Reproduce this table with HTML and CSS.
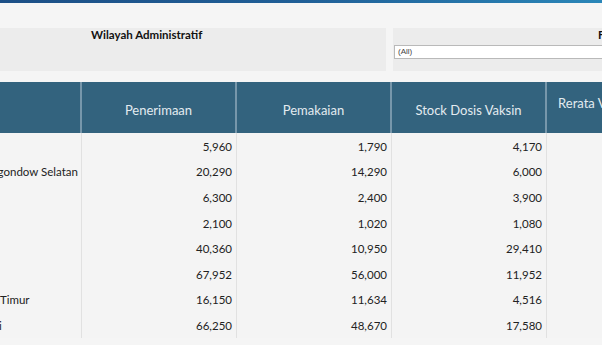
FILE: index.html
```html
<!DOCTYPE html>
<html lang="id">
<head>
<meta charset="utf-8">
<title>Stok Vaksin</title>
<link rel="stylesheet" href="styles.css">
</head>
<body>
<div class="topbar"></div>
<div class="board">
  <div class="filters">
    <div class="filter filter-wide">
      <div class="filter-title">Wilayah Administratif</div>
    </div>
    <div class="filter filter-narrow">
      <div class="filter-title filter-title-right">Fasilitas Kesehatan</div>
      <div class="select">(All)</div>
    </div>
  </div>
  <div class="table">
    <div class="row head">
      <div class="cell name"></div>
      <div class="cell">Penerimaan</div>
      <div class="cell">Pemakaian</div>
      <div class="cell">Stock Dosis Vaksin</div>
      <div class="cell">Rerata Vaksinasi Harian 7 Hari</div>
    </div>
    <div class="row"><div class="cell name">Kota Bitung</div><div class="cell num">5,960</div><div class="cell num">1,790</div><div class="cell num">4,170</div><div class="cell num"></div></div>
    <div class="row"><div class="cell name">Kabupaten Bolaang Mongondow Selatan</div><div class="cell num">20,290</div><div class="cell num">14,290</div><div class="cell num">6,000</div><div class="cell num"></div></div>
    <div class="row"><div class="cell name">Kota Tomohon</div><div class="cell num">6,300</div><div class="cell num">2,400</div><div class="cell num">3,900</div><div class="cell num"></div></div>
    <div class="row"><div class="cell name">Kota Manado</div><div class="cell num">2,100</div><div class="cell num">1,020</div><div class="cell num">1,080</div><div class="cell num"></div></div>
    <div class="row"><div class="cell name">Kabupaten Sangihe</div><div class="cell num">40,360</div><div class="cell num">10,950</div><div class="cell num">29,410</div><div class="cell num"></div></div>
    <div class="row"><div class="cell name">Kabupaten Talaud</div><div class="cell num">67,952</div><div class="cell num">56,000</div><div class="cell num">11,952</div><div class="cell num"></div></div>
    <div class="row"><div class="cell name">Kabupaten Kotawaringin Timur</div><div class="cell num">16,150</div><div class="cell num">11,634</div><div class="cell num">4,516</div><div class="cell num"></div></div>
    <div class="row"><div class="cell name">Kabupaten Pulau Morotai</div><div class="cell num">66,250</div><div class="cell num">48,670</div><div class="cell num">17,580</div><div class="cell num"></div></div>
  </div>
</div>
</body>
</html>
```
FILE: styles.css
```css
html, body {
  margin: 0;
  padding: 0;
}
body {
  background: #f5f5f5;
  font-family: Lato, "Liberation Sans", sans-serif;
  color: #222;
  overflow: hidden;
  width: 602px;
  height: 345px;
}
.topbar {
  height: 3px;
  background: linear-gradient(90deg, #1c4f86 0%, #205f97 50%, #2a86b8 100%);
}
.board {
  margin-left: -134px;
  width: 1000px;
}
.filters {
  display: flex;
  gap: 7px;
  margin-top: 25px;
  height: 43px;
}
.filter {
  background: #ececec;
  display: flex;
  flex-direction: column;
}
.filter-wide {
  width: 520px;
}
.filter-narrow {
  width: 420px;
  padding-left: 1px;
}
.filter-title {
  font-weight: 700;
  font-size: 11.5px;
  line-height: 14px;
  padding-left: 225px;
  color: #111;
}
.filter-title-right {
  padding-left: 204px;
}
.select {
  margin-top: 3px;
  height: 12px;
  background: #fff;
  border: 1px solid #b9b9b9;
  font-size: 8px;
  line-height: 12px;
  padding-left: 3px;
  color: #444;
  font-family: "Liberation Sans", sans-serif;
}
.table {
  margin-top: 11px;
}
.row {
  display: grid;
  grid-template-columns: 216px 155px 155px 155px 155px;
  height: 25.6px;
  background: #f4f4f4;
}
.row .cell {
  border-right: 1px solid #e1e1e1;
  display: flex;
  align-items: center;
  font-size: 11.5px;
  padding: 1px 4px 0;
  white-space: nowrap;
  overflow: hidden;
}
.row .num {
  justify-content: flex-end;
}
.row .name {
  padding-left: 7px;
}
.row.head {
  height: 51px;
  background: #33637e;
}
.row.head .cell {
  border-right: 2px solid #7797ab;
  color: #e3ebf0;
  font-size: 13px;
  justify-content: center;
  text-align: center;
  white-space: normal;
  padding: 6px 6px 0;
  line-height: 15px;
}
.row.head .cell:last-child {
  border-right: none;
}
```
